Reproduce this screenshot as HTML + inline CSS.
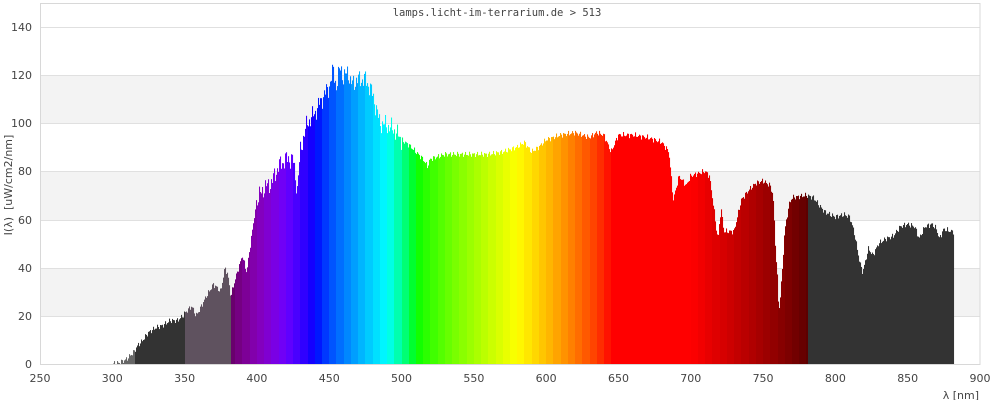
<!DOCTYPE html>
<html><head><meta charset="utf-8"><style>
html,body{margin:0;padding:0;background:#fff;width:1000px;height:400px;overflow:hidden}
svg{display:block}
text{font-family:"DejaVu Sans","Liberation Sans",sans-serif;font-size:11px;fill:#444}
</style></head><body>
<svg id="s" width="1000" height="400" xmlns="http://www.w3.org/2000/svg">
<rect x="40" y="75" width="940" height="48" fill="#f3f3f3"/>
<rect x="40" y="171" width="940" height="49" fill="#f3f3f3"/>
<rect x="40" y="268" width="940" height="48" fill="#f3f3f3"/>
<g stroke="#e0e0e0" stroke-width="1">
<line x1="40" y1="27.5" x2="980" y2="27.5"/><line x1="40" y1="75.5" x2="980" y2="75.5"/>
<line x1="40" y1="123.5" x2="980" y2="123.5"/><line x1="40" y1="171.5" x2="980" y2="171.5"/>
<line x1="40" y1="220.5" x2="980" y2="220.5"/><line x1="40" y1="268.5" x2="980" y2="268.5"/>
<line x1="40" y1="316.5" x2="980" y2="316.5"/>
</g>
<g id="bars"></g>
<rect x="40.5" y="3.5" width="939.5" height="361" fill="none" stroke="#d8d8d8"/>
<text x="497" y="16" text-anchor="middle" style="font-family:'DejaVu Sans Mono','Liberation Mono',monospace;font-size:10.5px">lamps.licht-im-terrarium.de &gt; 513</text>
<g text-anchor="end">
<text x="32" y="31">140</text><text x="32" y="79">120</text><text x="32" y="127">100</text>
<text x="32" y="175">80</text><text x="32" y="224">60</text><text x="32" y="272">40</text>
<text x="32" y="320">20</text><text x="32" y="368">0</text>
</g>
<g text-anchor="middle" id="xl"></g>
<text x="979" y="399" text-anchor="end">λ [nm]</text>
<text transform="translate(12,185) rotate(-90)" text-anchor="middle">I(λ)&#160; [uW/cm2/nm]</text>
</svg>
<script>
var d=[[299,0],[305,0.5],[310,2],[315,5],[318,8],[320,9],[325,13],[330,15],[335,16],[340,18],[345,18],[349,20],[350,21],[355,24],[358,20],[360,22],[365,28],[370,33],[372,32],[375,30],[378,40],[380,37],[382,28],[385,35],[390,45],[393,38],[395,47],[398,60],[400,68],[405,73],[410,75],[415,82],[420,85],[425,85],[428,72],[430,88],[433,96],[435,100],[440,104],[445,110],[450,115],[453,122],[455,115],[458,124],[460,118],[463,122],[465,116],[470,118],[475,118],[478,115],[480,112],[483,105],[485,100],[490,99],[495,97],[500,93],[505,91],[510,88],[515,85],[518,82],[520,85],[525,86],[530,87],[540,87],[550,87],[560,87],[570,88],[580,90],[585,92],[590,88],[595,90],[600,93],[610,95],[620,96],[630,94],[635,96],[640,95],[645,88],[650,95],[660,95],[670,94],[680,92],[685,88],[688,68],[692,78],[697,74],[700,78],[710,80],[713,78],[716,65],[718,55],[719,52],[721,65],[723,55],[730,55],[735,68],[740,72],[745,75],[750,76],[755,74],[757,70],[759,45],[760,36],[761,21],[763,35],[765,55],[768,66],[770,69],[780,70],[785,69],[790,65],[793,63],[800,61],[806,62],[810,61],[813,55],[817,42],[819,38],[823,48],[826,45],[830,50],[835,52],[840,53],[845,57],[850,58],[855,57],[858,52],[862,57],[867,58],[870,56],[872,52],[875,56],[880,55],[882,55]];
function val(w){if(w<d[0][0]||w>882.5)return 0;for(var i=1;i<d.length;i++){if(w<=d[i][0]){var a=d[i-1],b=d[i];return a[1]+(b[1]-a[1])*(w-a[0])/(b[0]-a[0]);}}return 0;}
function col(w){
 if(w<316)return "#666666";
 if(w<350||w>=781)return "#333333"; if(w<382)return "#5f525f";
 var q=Math.floor(w/5)*5+2.5,r=0,g=0,b=0;
 if(q<440){r=-(q-440)/60;b=1}else if(q<490){g=(q-440)/50;b=1}else if(q<510){g=1;b=-(q-510)/20}
 else if(q<580){r=(q-510)/70;g=1}else if(q<645){r=1;g=-(q-645)/65}else{r=1}
 var f=1; if(q<420)f=0.3+0.7*(q-380)/40; else if(q>700)f=0.3+0.7*(780-q)/80;
 function c(x){return Math.round(255*Math.pow(x*f,0.8));}
 return "rgb("+c(r)+","+c(g)+","+c(b)+")";}
var s="",sc=940/650;
for(var x=40;x<980;x++){var w=250+(x-40+0.5)/sc;var v=val(w);if(v<=0)continue;
 var n=(w>400&&w<500)?(Math.sin(w*3.1)*2.5+Math.sin(w*7.7)*2):(Math.sin(w*2.3)*0.8+Math.sin(w*5.3)*0.5);
 v=Math.max(0,v+n);var h=v*2.41;
 s+='<rect x="'+x+'" y="'+(364-h)+'" width="1.05" height="'+h+'" fill="'+col(w)+'"/>';}
document.getElementById("bars").innerHTML=s;
var t="";for(var k=250;k<=900;k+=50){t+='<text x="'+(40+(k-250)*sc)+'" y="382">'+k+'</text>';}
document.getElementById("xl").innerHTML=t;
</script>
</body></html>
